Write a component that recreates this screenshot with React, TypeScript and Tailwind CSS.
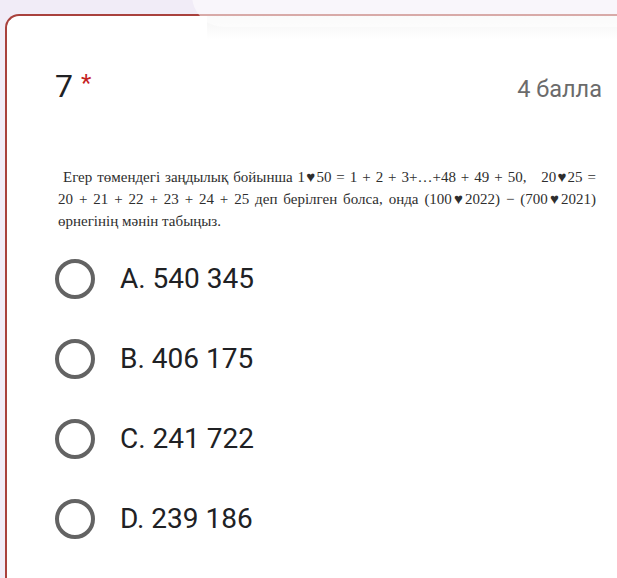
import React from "react";

const options = ["A. 540 345", "B. 406 175", "C. 241 722", "D. 239 186"];

function Radio() {
  return <div className="w-[40px] h-[40px] shrink-0 rounded-full border-[4px] border-[#636363]" />;
}

export default function App() {
  return (
    <div className="relative w-[617px] h-[578px] overflow-hidden bg-[#f1ecf7] pt-[14px] pl-[5px] font-['Roboto',sans-serif]">
      <div className="relative h-full bg-white border-l-2 border-t-2 border-[#a9413d] rounded-tl-[14px] pl-[48px] pr-[15px] pt-[50px]">
        {/* soft shadow under the previous card */}
        <div className="absolute left-[200px] right-0 top-0 h-[24px] bg-gradient-to-b from-[#f4f4f4] to-white" />

        <div className="relative flex h-[40px] items-baseline justify-between">
          <div className="text-[32px] leading-[40px] text-[#202124]">
            7 <span className="text-[24px] leading-none align-[6px] text-[#c5221f]">*</span>
          </div>
          <div className="text-[23.5px] leading-[40px] text-[#6b6b6b]">4 балла</div>
        </div>

        <div className="relative mt-[60px] ml-[3px] mr-[6px] font-['Liberation_Serif',serif] text-[15px] leading-[22px] text-[#2e2e2e]">
          <div className="h-[22px] overflow-hidden pl-[5px] text-justify [text-align-last:justify]">
            Егер төмендегі заңдылық бойынша 1♥50 = 1 + 2 + 3+…+48 + 49 + 50,&nbsp;&nbsp; 20♥25 =
          </div>
          <div className="h-[22px] overflow-hidden text-justify [text-align-last:justify]">
            20 + 21 + 22 + 23 + 24 + 25 деп берілген болса, онда (100♥2022) − (700♥2021)
          </div>
          <div className="h-[22px]">өрнегінің мәнін табыңыз.</div>
        </div>

        <div className="relative mt-[7px] flex flex-col">
          {options.map((o) => (
            <div key={o} className="h-[80px] flex items-center gap-[25px]">
              <Radio />
              <span className="text-[28px] text-[#202124]">{o}</span>
            </div>
          ))}
        </div>
      </div>

      {/* lower edge of the card above */}
      <div className="absolute left-[192px] right-0 top-[-10px] h-[37px] rounded-bl-[32px] bg-white/55" />
    </div>
  );
}
